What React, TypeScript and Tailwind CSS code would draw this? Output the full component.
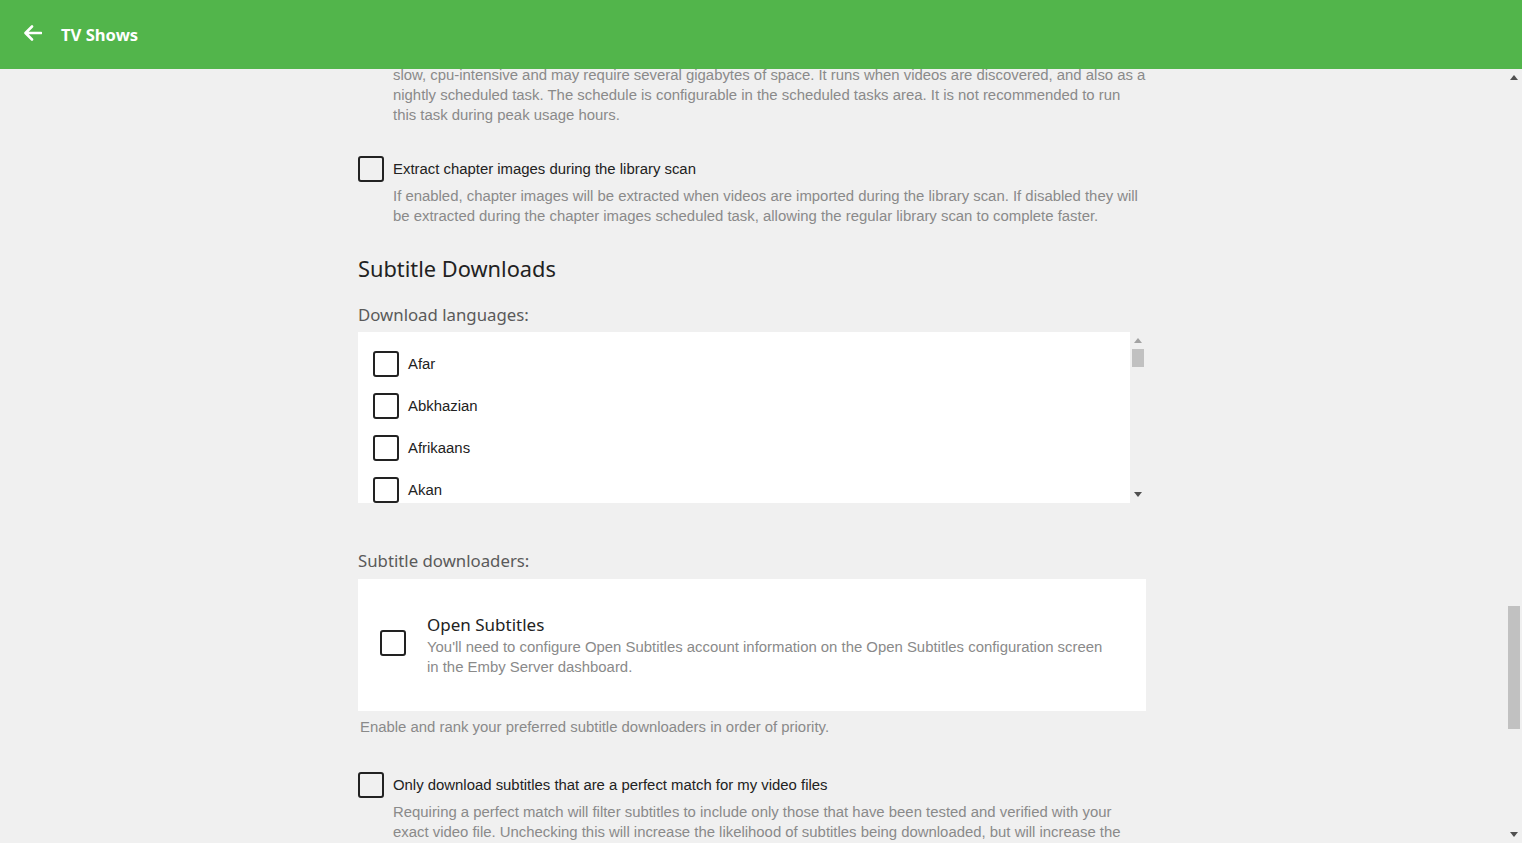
import React from "react";

const body = { fontFamily: '"Liberation Sans", Arial, sans-serif' };
const ui = { fontFamily: '"Noto Sans", "Open Sans", sans-serif' };

const Box = ({ className = "" }: { className?: string }) => (
  <div className={`w-[26px] h-[26px] shrink-0 border-2 border-[#222] rounded-[3px] bg-transparent ${className}`} />
);

const UpArrow = ({ color = "#555" }: { color?: string }) => (
  <svg width="8" height="5" viewBox="0 0 8 5">
    <path d="M0 5 L4 0 L8 5 Z" fill={color} />
  </svg>
);

const DownArrow = ({ color = "#555" }: { color?: string }) => (
  <svg width="8" height="5" viewBox="0 0 8 5">
    <path d="M0 0 L8 0 L4 5 Z" fill={color} />
  </svg>
);

const languages = ["Afar", "Abkhazian", "Afrikaans", "Akan", "Albanian"];

const App = () => {
  return (
    <div className="w-[1522px] h-[843px] flex flex-col overflow-hidden bg-[#f0f0f0]" style={body}>
      <header className="h-[69px] shrink-0 bg-[#52b54b] flex items-center pl-[23px] text-white">
        <svg width="19" height="16" viewBox="0 0 19 16" className="-mt-[4px]">
          <path d="M18 8 H3 M9 1.5 L2.5 8 L9 14.5" stroke="white" strokeWidth="2.6" fill="none" strokeLinecap="round" strokeLinejoin="round" />
        </svg>
        <span className="ml-[19px] text-[16.6px] font-bold mt-[1px]" style={ui}>TV Shows</span>
      </header>

      <div className="flex-1 flex min-h-0">
        <main className="flex-1 overflow-hidden">
          <div className="w-[788px] ml-[358px] -mt-[24px]">
            <p className="pl-[35px] text-[14.9px] leading-[20px] text-[#8a8a8a] whitespace-nowrap">
              Extracting chapter images will allow clients to display graphical scene selection menus. The process can be
              <br />
              slow, cpu-intensive and may require several gigabytes of space. It runs when videos are discovered, and also as a
              <br />
              nightly scheduled task. The schedule is configurable in the scheduled tasks area. It is not recommended to run
              <br />
              this task during peak usage hours.
            </p>

            <div className="mt-[31px] flex items-center h-[25px]">
              <Box />
              <span className="ml-[9px] text-[14.9px] text-[#222] mt-[1px]">Extract chapter images during the library scan</span>
            </div>
            <p className="mt-[5px] pl-[35px] text-[14.9px] leading-[20px] text-[#8a8a8a] whitespace-nowrap">
              If enabled, chapter images will be extracted when videos are imported during the library scan. If disabled they will
              <br />
              be extracted during the chapter images scheduled task, allowing the regular library scan to complete faster.
            </p>

            <h2 className="mt-[28px] text-[21.8px] leading-[30px] text-[#222]" style={ui}>Subtitle Downloads</h2>

            <div className="mt-[20px] text-[16.8px] leading-[22px] text-[#5a5a5a]" style={ui}>Download languages:</div>

            <div className="mt-[6px] h-[171px] flex bg-white">
              <div className="flex-1 overflow-hidden pl-[15px] pt-[19px]">
                {languages.map((l) => (
                  <div key={l} className="flex items-center h-[26px] mb-[16px]">
                    <Box />
                    <span className="ml-[9px] text-[14.9px] text-[#222] mt-[1px]">{l}</span>
                  </div>
                ))}
              </div>
              <div className="w-[16px] bg-[#f0f0f0] flex flex-col items-center pt-[6px] pb-[6px]">
                <UpArrow color="#a3a3a3" />
                <div className="mt-[6px] w-[12px] h-[18px] bg-[#c1c1c1]" />
                <div className="flex-1" />
                <DownArrow color="#505050" />
              </div>
            </div>

            <div className="mt-[47px] text-[16.8px] leading-[22px] text-[#5a5a5a]" style={ui}>Subtitle downloaders:</div>

            <div className="mt-[7px] h-[132px] bg-white flex items-center pl-[22px]">
              <Box className="-mt-[4px]" />
              <div className="ml-[21px]">
                <div className="text-[17px] leading-[24px] text-[#222]" style={ui}>Open Subtitles</div>
                <p className="text-[14.9px] leading-[20px] text-[#8a8a8a] whitespace-nowrap">
                  You'll need to configure Open Subtitles account information on the Open Subtitles configuration screen
                  <br />
                  in the Emby Server dashboard.
                </p>
              </div>
            </div>

            <p className="mt-[6px] pl-[2px] text-[14.9px] leading-[20px] text-[#8a8a8a]">
              Enable and rank your preferred subtitle downloaders in order of priority.
            </p>

            <div className="mt-[35px] flex items-center h-[25px]">
              <Box />
              <span className="ml-[9px] text-[14.9px] text-[#222] mt-[1px]">Only download subtitles that are a perfect match for my video files</span>
            </div>
            <p className="mt-[5px] pl-[35px] text-[14.9px] leading-[20px] text-[#8a8a8a] whitespace-nowrap">
              Requiring a perfect match will filter subtitles to include only those that have been tested and verified with your
              <br />
              exact video file. Unchecking this will increase the likelihood of subtitles being downloaded, but will increase the
              <br />
              chances of mistimed or incorrect subtitle text.
            </p>
          </div>
        </main>

        <div className="w-[17px] shrink-0 bg-[#f0f0f0] flex flex-col items-center pt-[6px] pb-[6px]">
          <UpArrow color="#505050" />
          <div className="h-[526px]" />
          <div className="w-[12px] h-[123px] bg-[#c1c1c1]" />
          <div className="flex-1" />
          <DownArrow color="#505050" />
        </div>
      </div>
    </div>
  );
};

export default App;
